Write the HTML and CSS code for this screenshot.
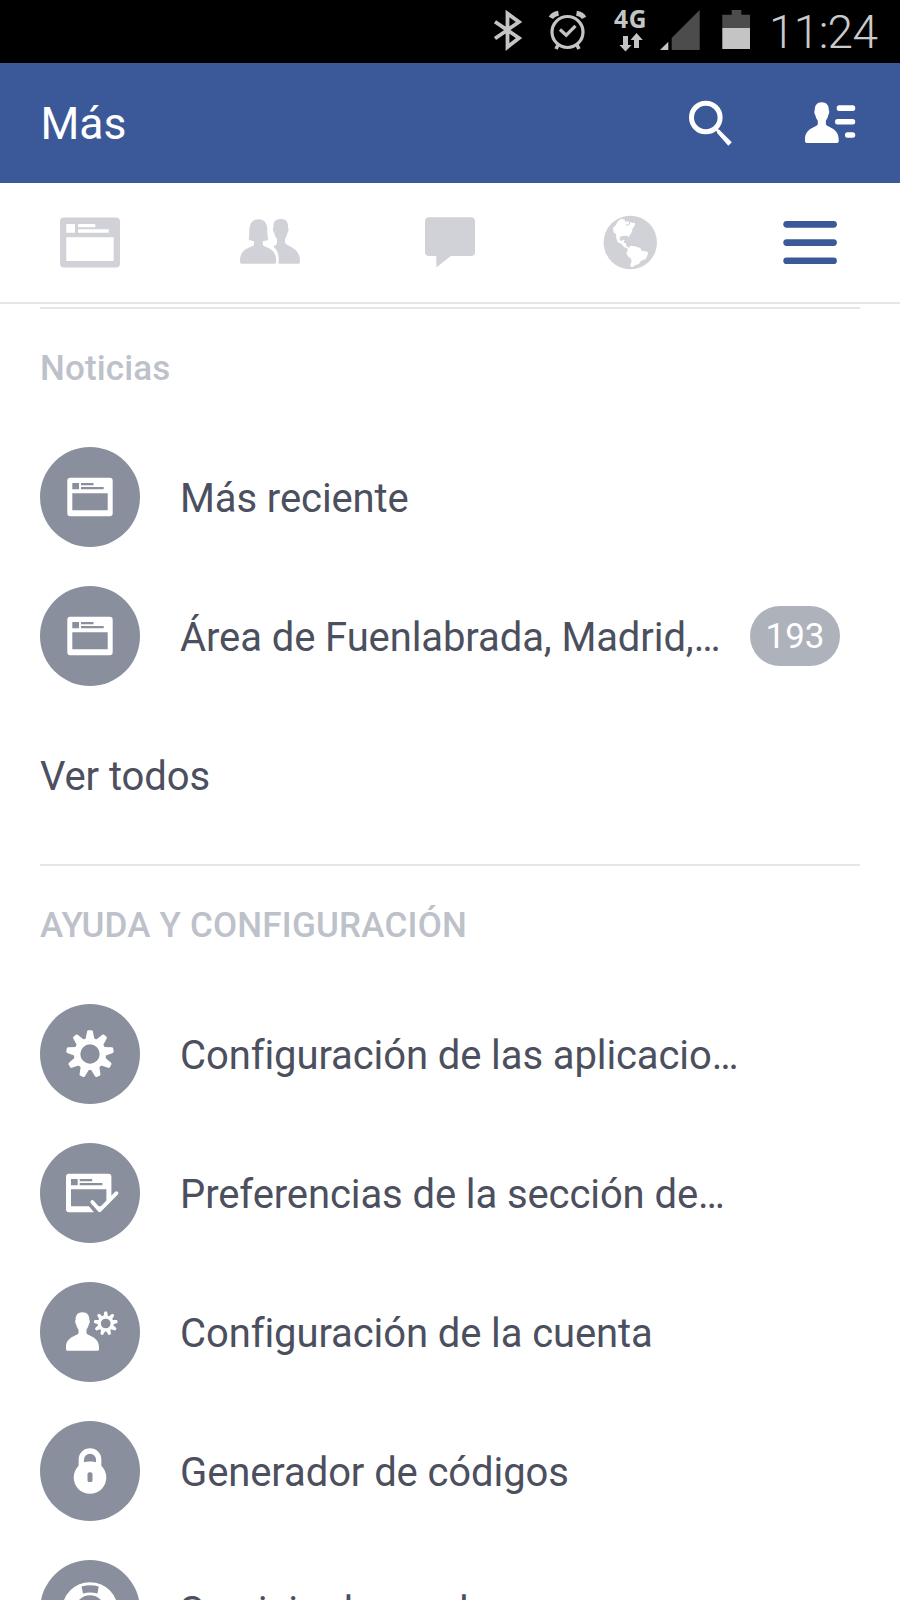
FILE: index.html
```html
<!DOCTYPE html>
<html lang="es">
<head>
<meta charset="utf-8">
<title>Más</title>
<link rel="stylesheet" href="styles.css">
</head>
<body>
<svg class="defs" width="0" height="0" aria-hidden="true">
  <defs>
    <g id="gear">
      <circle r="12.9" fill="none" stroke="#fff" stroke-width="6.4"/>
      <g fill="#fff">
        <path id="tooth" d="M-4.600-14 L-2.900-22.600 Q-2.600-23.800-1.500-23.800 H1.500 Q2.600-23.800 2.900-22.600 L4.600-14Z"/>
        <use href="#tooth" transform="rotate(40)"/><use href="#tooth" transform="rotate(80)"/>
        <use href="#tooth" transform="rotate(120)"/><use href="#tooth" transform="rotate(160)"/>
        <use href="#tooth" transform="rotate(200)"/><use href="#tooth" transform="rotate(240)"/>
        <use href="#tooth" transform="rotate(280)"/><use href="#tooth" transform="rotate(320)"/>
      </g>
    </g>
    <path id="person" d="M16.800 0C21.500 0 24 3.200 23.800 8C24.600 8.500 24.300 12 23.200 13C22.900 15.500 21.500 17 20.900 18.500V22C21.500 25 33.700 25.500 33.700 37V39Q33.700 40.700 32 40.700H1.700Q0 40.700 0 39V37C0 25.500 12.200 25 12.800 22V18.500C12 17 10.700 15.500 10.400 13C9.300 12 9 8.500 9.800 8C9.600 3.200 12 0 16.800 0Z"/>
    <path id="window" fill-rule="evenodd" d="M30.300 30.700H69.700Q72.700 30.700 72.700 33.700V66.300Q72.700 69.300 69.700 69.300H30.300Q27.300 69.300 27.300 66.300V33.700Q27.300 30.700 30.300 30.700ZM32.300 36V42.300H39V36ZM41 36V38.300H53.500V36ZM41 40V42.300H63.700V40ZM32.300 46.300V63.300H67.700V46.300Z"/>
  </defs>
</svg>
<div class="screen">
  <div class="status">
    <svg width="45" height="62" viewBox="490 0 45 62"><path d="M495 21.700L519 38 507.500 47V13.500L519 22 495 38.500" fill="none" stroke="#c4c4c4" stroke-width="3.800"/></svg>
    <svg width="70" height="62" viewBox="535 0 70 62" fill="none" stroke="#c4c4c4"><circle cx="567.500" cy="32" r="15.500" stroke-width="3.200"/><path d="M560 29.500L566.200 35.200 575.500 25.800" stroke-width="3.200"/><path d="M551 17.800Q553 14 558.500 13.200M576.500 13.200Q582 14 584 17.800" stroke-width="5"/><path d="M558 45L556 49M577 45L579 49" stroke-width="3.600"/></svg>
    <svg width="50" height="62" viewBox="605 0 50 62" fill="#c4c4c4"><text class="network" x="614" y="27.700" textLength="32.500">4G</text><path d="M623 36h5v9h3.500l-6 6.500-6-6.500h3.500zM634 48h5v-8h3.800l-6.300-7-6 7h3.500z"/></svg>
    <svg width="60" height="62" viewBox="655 0 60 62"><path d="M660 50h8.300v-8.300z" fill="#c4c4c4"/><path d="M671.700 50h28V10l-28 28z" fill="#4c4c4c"/></svg>
    <svg width="50" height="62" viewBox="715 0 50 62"><path d="M722.300 28V14.700h9.400V10h9.600v4.700h8.700V28z" fill="#4c4c4c"/><path d="M722.300 28H750v21h-27.700z" fill="#c4c4c4"/></svg>
    <span class="clock">11:24</span>
  </div>
  <header class="header">
    <h1>Más</h1>
    <svg width="220" height="120" viewBox="680 63 220 120"><circle cx="705.800" cy="117.500" r="14.300" fill="none" stroke="#fff" stroke-width="5"/><path d="M715 127.500L719.500 130 731.800 142.300 728.300 145.800 717.500 133.500Z" fill="#fff"/><use href="#person" x="805" y="102.200" fill="#fff"/><g fill="#fff"><rect x="836.700" y="105.300" width="18.500" height="5.700" rx="2.500"/><rect x="835" y="119" width="20.200" height="5.500" rx="2.500"/><rect x="845" y="132.200" width="10.200" height="5.600" rx="2.500"/></g></svg>
  </header>
  <nav class="tabs">
    <svg viewBox="0 183 180 120"><path fill-rule="evenodd" d="M64 217.500H116Q120 217.500 120 221.500V263.500Q120 267.500 116 267.500H64Q60 267.500 60 263.500V221.500Q60 217.500 64 217.500ZM66.300 224V232.700H75V224ZM78 224V227.300H95.300V224ZM78 229.300V232.700H108.700V229.300ZM66.300 237.300V261H113.700V237.300Z"/></svg>
    <svg viewBox="180 183 180 120"><path d="M258.500 219.300C265 219.300 267.500 224 267.300 231C267.300 235 268 238 268 240C265.500 241.300 263.500 240.500 262.800 241.300V245C264.500 248 276.200 247 276.200 261V262Q276.200 263.800 274.500 263.800H241.800Q240 263.800 240 262V261C240 247 252 248 254 245V241.300C252.500 240.500 251 241.300 248.800 240C248.800 238 249.300 235 249.300 231C249.300 224 252 219.300 258.500 219.300Z"/><path d="M280.700 219C286 219 288.500 222 288 227.500C289 228 288.500 232.500 287.300 233C287 236 285.500 238 285 239V242.500C286.500 247 300 247 300 261V262Q300 263.800 298.300 263.800H278.500C279.200 257 278.500 250.500 273.200 246.600C275.500 245.500 277 244.500 277 242.500V239C276 238 274.700 236 274.300 233C273 232.500 272.500 228 273.500 227.500C273 222 275.500 219 280.700 219Z"/></svg>
    <svg viewBox="360 183 180 120"><path d="M429 217.300H471Q475 217.300 475 221.300V252Q475 256 471 256H450.700L436.300 267.500V256H429Q425 256 425 252V221.300Q425 217.300 429 217.300Z"/></svg>
    <svg viewBox="540 183 180 120"><circle cx="630.300" cy="242.500" r="26.700"/><path transform="translate(400 190) scale(.33333)" fill="#fff" d="M655 92L664 86 676 90 674 97 681 94 686 95 687 101 684 105 680 101 678 105 683 108 690 103 690 95 697 99 705 98 704 107 697 117 696 125 688 137 688 144 684 138 672 137 660 140 659 150 665 153 671 149 674 151 670 158 678 160 679 169 687 173 692 167 704 169 721 174 725 182 743 185 744 191 738 206 722 213 717 222 704 226 700 231 693 231 691 224 695 214 693 206 684 199 679 190 684 178 679 174 672 171 662 160 654 158 649 145 648 133 641 127 639 113 646 107Z"/></svg>
    <svg class="active" viewBox="720 183 180 120"><rect x="783.300" y="221" width="53.600" height="6.700" rx="3.350"/><rect x="783.300" y="239.200" width="53.600" height="6.700" rx="3.350"/><rect x="783.300" y="257.400" width="53.600" height="6.700" rx="3.350"/></svg>
  </nav>
  <main>
    <section>
      <h2>Noticias</h2>
      <div class="row"><svg class="icon" viewBox="0 0 100 100"><use href="#window"/></svg><span class="label">Más reciente</span></div>
      <div class="row"><svg class="icon" viewBox="0 0 100 100"><use href="#window"/></svg><span class="label">Área de Fuenlabrada, Madrid,…</span><span class="badge">193</span></div>
      <div class="row"><span class="label">Ver todos</span></div>
    </section>
    <section>
      <h2 class="help">AYUDA Y CONFIGURACIÓN</h2>
      <div class="row"><svg class="icon" viewBox="0 0 100 100"><use href="#gear" transform="translate(50 50)"/></svg><span class="label">Configuración de las aplicacio…</span></div>
      <div class="row"><svg class="icon" viewBox="0 0 100 100"><use href="#window" x="-1.300"/><path d="M50 56L59.700 67 69 57.700 74 49V72H56L48 62Z" fill="#898f9c"/><path d="M52.300 59L59.700 67.200 76.500 50.200" fill="none" stroke="#fff" stroke-width="3.800" stroke-linecap="round" stroke-linejoin="round"/></svg><span class="label">Preferencias de la sección de…</span></div>
      <div class="row"><svg class="icon" viewBox="0 0 100 100"><use href="#person" transform="translate(26 30.200) scale(.98 .95)"/><use href="#gear" transform="translate(65.700 41.500) scale(.5)"/></svg><span class="label">Configuración de la cuenta</span></div>
      <div class="row"><svg class="icon" viewBox="0 0 100 100"><path d="M41.300 46V38.500a8.700 8.500 0 0 1 17.400 0V46" fill="none" stroke="#fff" stroke-width="5.300"/><path fill-rule="evenodd" d="M39 44.500C42 39.200 58 39.200 61 44.500A16.300 16.300 0 1 1 39 44.500ZM47.500 53V59.500Q47.500 61 49 61H51Q52.500 61 52.500 59.500V53Q52.500 51.300 50.500 51.300H49.500Q47.500 51.300 47.500 53Z"/></svg><span class="label">Generador de códigos</span></div>
      <div class="row"><svg class="icon" viewBox="0 0 100 100"><circle cx="50" cy="50" r="21.300" fill="none" stroke="#fff" stroke-width="13"/><path d="M41.500 26.500Q50 24.200 58.700 26.500L57.500 33.500Q50 31.500 43 33.500Z" fill="#898f9c"/></svg><span class="label">Servicio de ayuda</span></div>
    </section>
  </main>
</div>
</body>
</html>
```
FILE: styles.css
```css
* { box-sizing: border-box; }
body { margin: 0; background: #fff; font-family: Roboto, sans-serif; }
.defs { position: absolute; }
.screen { height: 1600px; overflow: hidden; display: flex; flex-direction: column; }
.screen > * { flex: none; }
.status { height: 62.5px; background: #000; display: flex; padding-left: 490px; }
.network { font: 700 24.500px "Open Sans", sans-serif; }
.clock { margin-left: 4px; font-size: 46px; font-weight: 300; line-height: 64px; letter-spacing: -0.7px; color: #cacaca; white-space: nowrap; }
.header { height: 120px; background: #3b5998; display: flex; justify-content: space-between; padding-left: 40.5px; }
h1 { margin: 0; font-size: 44.5px; font-weight: 400; line-height: 123px; color: #fff; }
.tabs { height: 121px; display: grid; grid-template-columns: repeat(5, 1fr); border-bottom: 2px solid #e5e6e7; fill: #d1d2d8; }
.tabs svg { width: 180px; height: 120px; }
.tabs .active { fill: #3b5998; }
main { padding: 3.700px 40px 0; }
section { border-top: 2px solid #e5e6e7; padding-bottom: 19.500px; }
h2 { margin: 0; height: 118px; font-size: 35px; font-weight: 500; line-height: 119px; letter-spacing: 0.15px; color: #bdc1c9; white-space: nowrap; }
.help { letter-spacing: 0.2px; }
.row { height: 139.170px; display: flex; align-items: center; }
.icon { flex: none; width: 100px; height: 100px; margin-right: 40px; border-radius: 50%; background: #898f9c; fill: #fff; }
.label { font-size: 40px; line-height: 48px; letter-spacing: -0.1px; color: #4b4f5e; white-space: nowrap; padding-top: 4px; }
.badge { margin-left: auto; margin-right: 20px; width: 90px; height: 60px; border-radius: 30px; background: #adb2bb; color: #fff; font-size: 35px; line-height: 61px; text-align: center; }
```
